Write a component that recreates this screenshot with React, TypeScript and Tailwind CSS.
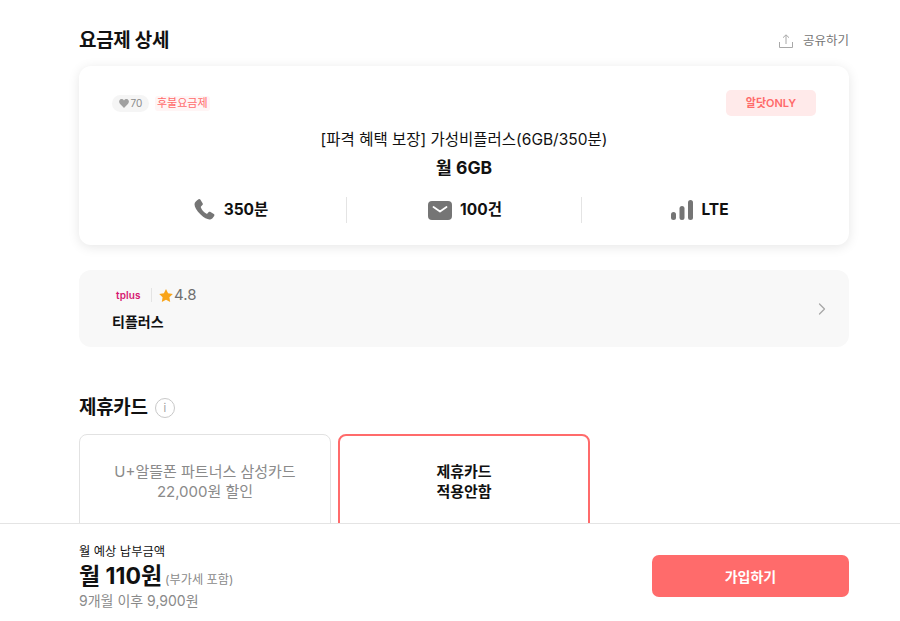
import React from "react";
import { ChevronRight } from "lucide-react";

const PhoneIcon = () => (
  <svg width="24" height="24" viewBox="0 0 24 24" className="text-[#757575]" fill="currentColor">
    <path d="M6.6 1.3c.6-.4 1.3-.3 1.7.3l2.3 3.6c.4.6.3 1.3-.2 1.8L9 8.4c-.3.3-.3.6-.2.9.5 1.4 1.2 2.7 2.2 3.8 1 1.1 2.2 2 3.5 2.6.3.1.7.1.9-.2l1.3-1.4c.5-.5 1.2-.6 1.8-.2l3.3 2.2c.6.4.8 1.2.4 1.8-.9 1.5-2.2 3-4 3.5-2 .5-5.7-.9-9.6-4.8C4.700 12.700 2.500 8.900 2.500 6.300c0-2 2.200-4 4.100-5z" />
  </svg>
);

const MailIcon = () => (
  <svg width="24" height="19" viewBox="0 0 24 19">
    <rect width="24" height="19" rx="4" fill="#757575" />
    <path d="M5.500 6l6.500 4.500L18.500 6" fill="none" stroke="#fff" strokeWidth="1.800" strokeLinecap="round" strokeLinejoin="round" />
  </svg>
);

const SignalIcon = () => (
  <svg width="22" height="20" viewBox="0 0 22 20" fill="#757575">
    <rect x="0" y="12" width="5" height="8" rx="2.500" />
    <rect x="8.500" y="6" width="5" height="14" rx="2.500" />
    <rect x="17" y="0" width="5" height="20" rx="2.500" />
  </svg>
);

const ShareIcon = () => (
  <svg width="14" height="14" viewBox="0 0 14 14" fill="none" stroke="#a8a8a8" strokeWidth="1">
    <path d="M.5 8v5.500h13V8M7 10V1M4 3.700 7 .8l3 2.900" />
  </svg>
);

const Spec = ({ icon, label, border }: { icon: React.ReactNode; label: string; border?: boolean }) => (
  <div className={`flex h-[26px] flex-1 items-center justify-center gap-[8px] pl-[2px] ${border ? "border-l border-[#e4e4e4]" : ""}`}>
    {icon}
    <span className="text-[15.5px] font-bold text-[#111]">{label}</span>
  </div>
);

export default function App() {
  return (
    <div className="h-[621px] overflow-hidden bg-white font-['Inter','Noto_Sans_CJK_KR',sans-serif] text-[#111]">
      <main className="ml-[79px] w-[770px] pt-[27px]">
        <div className="flex h-[28px] items-center justify-between">
          <h1 className="text-[19px] font-bold tracking-[-0.3px]">요금제 상세</h1>
          <button className="flex items-center gap-[10px] text-[12.500px] text-[#757575]">
            <ShareIcon />
            공유하기
          </button>
        </div>

        <section className="mt-[11px] h-[179px] rounded-[12px] bg-white px-[33px] pt-[24px] shadow-[0_2px_12px_rgba(0,0,0,0.10)]">
          <div className="flex items-start justify-between">
            <div className="mt-[5px] flex items-center gap-[6px]">
              <span className="flex h-[17px] w-[37px] items-center justify-center gap-[2px] rounded-full bg-[#f5f5f5] text-[10px] text-[#8a8a8a]">
                <svg width="10" height="9" viewBox="0 0 24 22" fill="#a0a0a0">
                  <path d="M12 22 2 11.500C-1 8-.5 3.500 2.500 1.300 5.500-.8 9.500.2 12 3.500 14.500.2 18.500-.8 21.500 1.300c3 2.200 3.500 6.700.5 10.200z" />
                </svg>
                70
              </span>
              <span className="flex h-[15px] items-center rounded-[3px] bg-[#fff5f5] px-[2px] text-[11px] text-[#ff6b6b]">
                후불요금제
              </span>
            </div>
            <span className="flex h-[26px] w-[90px] items-center justify-center rounded-[5px] bg-[#ffeaea] text-[11px] font-semibold text-[#ff6b6b]">
              알닷ONLY
            </span>
          </div>

          <p className="mt-[13px] text-center text-[15.500px] leading-[22px]">[파격 혜택 보장] 가성비플러스(6GB/350분)</p>
          <p className="mt-[5px] text-center text-[17.500px] font-bold leading-[24px]">월 6GB</p>

          <div className="mt-[17px] flex">
            <Spec icon={<PhoneIcon />} label="350분" />
            <Spec icon={<MailIcon />} label="100건" border />
            <Spec icon={<SignalIcon />} label="LTE" border />
          </div>
        </section>

        <section className="mt-[25px] flex h-[77px] items-center justify-between rounded-[12px] bg-[#f8f8f8] pl-[33px] pr-[17px]">
          <div>
            <div className="flex h-[20px] items-center">
              <span className="ml-[4px] w-[30px] text-[10px] font-semibold leading-none tracking-[0.1px] text-[#d6166f]">tplus</span>
              <span className="ml-[5px] h-[14px] border-l border-[#e4e4e4]" />
              <svg className="ml-[7px]" width="14" height="13" viewBox="0 0 24 23" fill="#f9a51a">
                <path d="M12 0l3.700 7.600 8.300 1.200-6 5.900 1.400 8.300L12 19l-7.400 4L6 14.700 0 8.800l8.300-1.200z" />
              </svg>
              <span className="ml-[1px] text-[15px] text-[#6f6f6f]">4.8</span>
            </div>
            <p className="mt-[7px] text-[14px] font-bold leading-[20px]">티플러스</p>
          </div>
          <ChevronRight size={20} strokeWidth={1.500} className="text-[#a8a8a8]" />
        </section>

        <div className="mt-[48px] flex h-[26px] items-center gap-[7px]">
          <h2 className="text-[19px] font-bold tracking-[-0.3px]">제휴카드</h2>
          <span className="flex h-[20px] w-[20px] items-center justify-center rounded-full border border-[#c8c8c8] text-[11px] text-[#a0a0a0]">
            i
          </span>
        </div>

        <div className="mt-[13px] flex gap-[7px]">
          <div className="flex h-[140px] w-[252px] flex-col items-center rounded-[8px] border border-[#e2e2e2] pt-[27px] text-center text-[15px] leading-[20px] text-[#8a8a8a]">
            <span>U+알뜰폰 파트너스 삼성카드</span>
            <span>22,000원 할인</span>
          </div>
          <div className="flex h-[140px] w-[252px] flex-col items-center rounded-[8px] border-2 border-[#ff6b6b] pt-[26px] text-center text-[15px] font-bold leading-[20px] text-[#111]">
            <span>제휴카드</span>
            <span>적용안함</span>
          </div>
        </div>
      </main>

      <footer className="fixed bottom-0 left-0 h-[98px] w-[900px] border-t border-[#e4e4e4] bg-white">
        <div className="ml-[79px] flex w-[770px] items-start justify-between pt-[20px]">
          <div>
            <p className="text-[12.300px] leading-[16px]">월 예상 납부금액</p>
            <p className="mt-[1px] flex items-baseline gap-[3px] leading-[30px]">
              <span className="text-[23px] font-bold">월 110원</span>
              <span className="text-[12.200px] text-[#8a8a8a]">(부가세 포함)</span>
            </p>
            <p className="-mt-[3px] text-[14px] leading-[18px] text-[#8a8a8a]">9개월 이후 9,900원</p>
          </div>
          <button className="mt-[11px] h-[42px] w-[197px] rounded-[7px] bg-[#ff6b6b] text-[14px] font-bold text-white">
            가입하기
          </button>
        </div>
      </footer>
    </div>
  );
}
